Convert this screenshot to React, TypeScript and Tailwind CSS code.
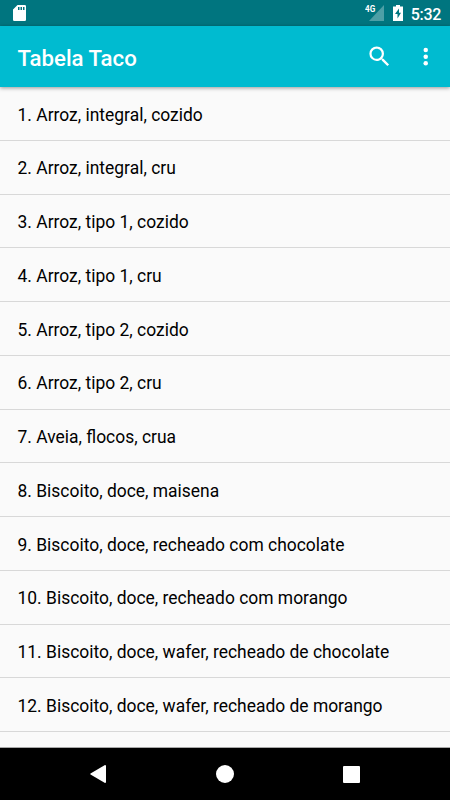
import React from "react";

const foods = [
    "Arroz, integral, cozido",
    "Arroz, integral, cru",
    "Arroz, tipo 1, cozido",
    "Arroz, tipo 1, cru",
    "Arroz, tipo 2, cozido",
    "Arroz, tipo 2, cru",
    "Aveia, flocos, crua",
    "Biscoito, doce, maisena",
    "Biscoito, doce, recheado com chocolate",
    "Biscoito, doce, recheado com morango",
    "Biscoito, doce, wafer, recheado de chocolate",
    "Biscoito, doce, wafer, recheado de morango",
];

const StatusBar: React.FC = () => (
    <div className="flex h-[26px] shrink-0 items-center bg-[#00757f] pl-[13px] pr-[9px] text-white">
        {/* SD card */}
        <svg width="13" height="16" viewBox="0 0 13 16" fill="currentColor">
            <path
                fillRule="evenodd"
                d="M4.500 0h7.200A1.300 1.300 0 0 1 13 1.300v13.400a1.300 1.300 0 0 1-1.300 1.300H1.300A1.300 1.300 0 0 1 0 14.700V4.500zM5 2v3h1.500V2zM7.500 2v3H9V2zM10 2v3h1.500V2z"
            />
        </svg>
        <div className="ml-auto flex items-center">
            <span className="mb-[8px] w-[10px] origin-left scale-x-90 text-[9px] font-bold leading-none">4G</span>
            <svg className="-ml-[6px]" width="15" height="16" viewBox="0 0 15 16">
                <path d="M15 0v16H0z" fill="#4d9fa6" />
            </svg>
            {/* Charging battery */}
            <svg className="ml-[9px]" width="10" height="16" viewBox="0 0 10 16" fill="currentColor">
                <path fillRule="evenodd" d="M3 0h4v1.500h3V16H0V1.500h3zM6 3.500 2 9h2.500v4.500L8 7.800H6z" />
            </svg>
            <span className="ml-[8px] mt-[3px] text-[16px] font-medium leading-none tracking-[-0.3px]">5:32</span>
        </div>
    </div>
);

const AppBar: React.FC = () => (
    <header className="z-10 flex h-[61px] shrink-0 items-center bg-[#00bbd0] pl-[17.500px] pr-[11px] text-white shadow-[0_1px_4px_rgba(0,0,0,0.4)]">
        <h1 className="mt-[4px] text-[22.200px] font-medium">Tabela Taco</h1>
        <svg className="ml-auto" width="27" height="27" viewBox="0 0 24 24" fill="currentColor">
            <path d="M15.500 14h-.79l-.28-.27A6.471 6.471 0 0 0 16 9.500 6.500 6.500 0 1 0 9.500 16c1.610 0 3.090-.59 4.230-1.570l.27.28v.79l5 4.990L20.490 19zm-6 0C7.010 14 5 11.990 5 9.500S7.010 5 9.500 5 14 7.010 14 9.500 11.990 14 9.500 14" />
        </svg>
        <svg className="ml-[19px]" width="27" height="27" viewBox="0 0 24 24" fill="currentColor">
            <circle cx="12.200" cy="6.300" r="2" />
            <circle cx="12.200" cy="12.200" r="2" />
            <circle cx="12.200" cy="18.100" r="2" />
        </svg>
    </header>
);

const NavigationBar: React.FC = () => (
    <nav className="flex h-[52px] shrink-0 items-center bg-black pl-[90px] pr-[90px] text-white">
        <svg width="16" height="18" viewBox="0 0 16 18" fill="currentColor">
            <path d="M15 0q1 0 1 1v16q0 1-1 1L.5 9.500q-.5-.5 0-1z" />
        </svg>
        <div className="ml-[110px] size-[18px] rounded-full bg-white" />
        <div className="ml-[109px] size-[17px] rounded-[1px] bg-white" />
    </nav>
);

export default function App() {
    return (
        <div className="flex h-[800px] w-[450px] flex-col overflow-hidden bg-[#fafafa] font-[Roboto,sans-serif]">
            <StatusBar />
            <AppBar />
            <main className="min-h-0 flex-1 overflow-hidden border-b border-[#a8a8a8]">
                {foods.map((food, index) => (
                    <div
                        key={food}
                        className="flex h-[53.780px] items-center border-b border-[#d8d8d8] pl-[17.500px] pt-[2.500px] text-[17.440px] text-black"
                    >
                        {index + 1}. {food}
                    </div>
                ))}
            </main>
            <NavigationBar />
        </div>
    );
}
